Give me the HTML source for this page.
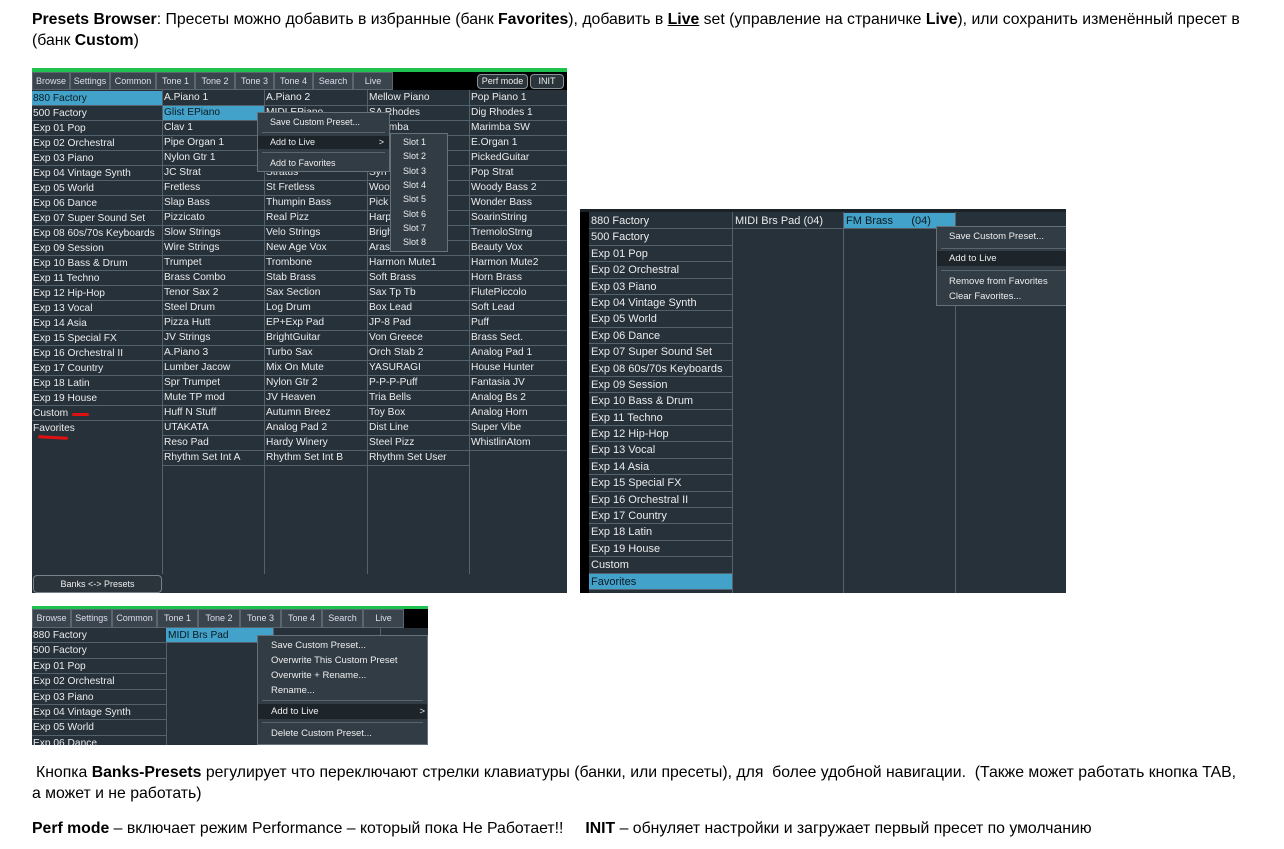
<!DOCTYPE html>
<html><head><meta charset="utf-8">
<style>
*{margin:0;padding:0;box-sizing:border-box}
body{width:1284px;height:849px;background:#fff;position:relative;overflow:hidden;font-family:"Liberation Sans","DejaVu Sans",sans-serif;color:#000}
.t{position:absolute;font-size:15.8px;white-space:nowrap;line-height:19px}
.p{position:absolute;background:#27313a;overflow:hidden}
.col{position:absolute;color:#ececec;font-size:10.2px}
.col div{height:15px;line-height:14px;border-bottom:1px solid #55616b;padding-left:1px;white-space:nowrap;overflow:hidden}
.vl{position:absolute;width:1px;background:#55616b}
.sel{background:#43a2c9;color:#0a1a22}
.tabs{position:absolute;display:flex;font-size:9px;color:#dde;}
.tabs span{display:block;height:100%;background:#3a444c;border:1px solid #5b666e;text-align:center;line-height:16px}
.menu{position:absolute;background:#323c44;border:1px solid #66717a;color:#eee;font-size:9px}
.menu div{position:absolute;left:0;right:0;padding-left:12px;height:13px;line-height:13px;white-space:nowrap}
.menu .sep{height:1px;background:#5a656d;padding:0;left:4px;right:4px}
.menu .hi{background:#1d252b}
.col2{position:absolute;color:#ececec;font-size:11px}
.col2 div{height:16.4px;line-height:16px;border-bottom:1px solid #55616b;border-right:1px solid #55616b;padding-left:2px;white-space:nowrap}
</style></head><body>

<div class="t" style="left:32px;top:10px"><b>Presets Browser</b>: Пресеты можно добавить в избранные (банк <b>Favorites</b>), добавить в <b><u>Live</u></b> set (управление на страничке <b>Live</b>), или сохранить изменённый пресет в</div>
<div class="t" style="left:32px;top:31px">(банк <b>Custom</b>)</div>

<!-- Panel 1 -->
<div class="p" style="left:32px;top:68px;width:535px;height:525px">
  <div style="position:absolute;left:0;top:0;width:535px;height:4px;background:#1fc24f"></div>
  <div style="position:absolute;left:0;top:4px;width:535px;height:18px;background:#000"></div>
  <div class="tabs" style="left:0;top:4px;height:18px">
    <span style="width:38px">Browse</span><span style="width:40px">Settings</span><span style="width:46px">Common</span><span style="width:39px">Tone 1</span><span style="width:40px">Tone 2</span><span style="width:39px">Tone 3</span><span style="width:39px">Tone 4</span><span style="width:40px">Search</span><span style="width:40px">Live</span>
  </div>
  <div style="position:absolute;left:445px;top:6px;width:51px;height:15px;border:1px solid #8a949b;border-radius:4px;background:#2b343b;color:#eee;font-size:9px;text-align:center;line-height:13px">Perf mode</div>
  <div style="position:absolute;left:498px;top:6px;width:34px;height:15px;border:1px solid #8a949b;border-radius:4px;background:#2b343b;color:#eee;font-size:9px;text-align:center;line-height:13px">INIT</div>

  <div class="vl" style="left:130px;top:22px;height:484px"></div>
  <div class="vl" style="left:232px;top:22px;height:484px"></div>
  <div class="vl" style="left:335px;top:22px;height:484px"></div>
  <div class="vl" style="left:437px;top:22px;height:484px"></div>

  <div class="col" style="left:0;top:23px;width:130px">
    <div class="sel" style="line-height:16px">880 Factory</div><div style="line-height:16px">500 Factory</div><div style="line-height:16px">Exp 01 Pop</div><div style="line-height:16px">Exp 02 Orchestral</div><div style="line-height:16px">Exp 03 Piano</div><div style="line-height:16px">Exp 04 Vintage Synth</div><div style="line-height:16px">Exp 05 World</div><div style="line-height:16px">Exp 06 Dance</div><div style="line-height:16px">Exp 07 Super Sound Set</div><div style="line-height:16px">Exp 08 60s/70s Keyboards</div><div style="line-height:16px">Exp 09 Session</div><div style="line-height:16px">Exp 10 Bass &amp; Drum</div><div style="line-height:16px">Exp 11 Techno</div><div style="line-height:16px">Exp 12 Hip-Hop</div><div style="line-height:16px">Exp 13 Vocal</div><div style="line-height:16px">Exp 14 Asia</div><div style="line-height:16px">Exp 15 Special FX</div><div style="line-height:16px">Exp 16 Orchestral II</div><div style="line-height:16px">Exp 17 Country</div><div style="line-height:16px">Exp 18 Latin</div><div style="line-height:16px">Exp 19 House</div><div style="line-height:16px">Custom</div><div style="border:none;line-height:16px">Favorites</div>
  </div>
  <div class="col" style="left:131px;top:23px;width:101px;line-height:16px">
    <div>A.Piano 1</div><div class="sel">Glist EPiano</div><div>Clav 1</div><div>Pipe Organ 1</div><div>Nylon Gtr 1</div><div>JC Strat</div><div>Fretless</div><div>Slap Bass</div><div>Pizzicato</div><div>Slow Strings</div><div>Wire Strings</div><div>Trumpet</div><div>Brass Combo</div><div>Tenor Sax 2</div><div>Steel Drum</div><div>Pizza Hutt</div><div>JV Strings</div><div>A.Piano 3</div><div>Lumber Jacow</div><div>Spr Trumpet</div><div>Mute TP mod</div><div>Huff N Stuff</div><div>UTAKATA</div><div>Reso Pad</div><div>Rhythm Set Int A</div>
  </div>
  <div class="col" style="left:233px;top:23px;width:102px">
    <div>A.Piano 2</div><div>MIDI EPiano</div><div>&nbsp;</div><div>&nbsp;</div><div>&nbsp;</div><div>Stratus</div><div>St Fretless</div><div>Thumpin Bass</div><div>Real Pizz</div><div>Velo Strings</div><div>New Age Vox</div><div>Trombone</div><div>Stab Brass</div><div>Sax Section</div><div>Log Drum</div><div>EP+Exp Pad</div><div>BrightGuitar</div><div>Turbo Sax</div><div>Mix On Mute</div><div>Nylon Gtr 2</div><div>JV Heaven</div><div>Autumn Breez</div><div>Analog Pad 2</div><div>Hardy Winery</div><div>Rhythm Set Int B</div>
  </div>
  <div class="col" style="left:336px;top:23px;width:101px">
    <div>Mellow Piano</div><div>SA Rhodes</div><div>Marimba</div><div>&nbsp;</div><div>&nbsp;</div><div>Syn Strat</div><div>Woody Bass</div><div>Pick Bass</div><div>Harp</div><div>Bright</div><div>Arasian Morn</div><div>Harmon Mute1</div><div>Soft Brass</div><div>Sax Tp Tb</div><div>Box Lead</div><div>JP-8 Pad</div><div>Von Greece</div><div>Orch Stab 2</div><div>YASURAGI</div><div>P-P-P-Puff</div><div>Tria Bells</div><div>Toy Box</div><div>Dist Line</div><div>Steel Pizz</div><div>Rhythm Set User</div>
  </div>
  <div class="col" style="left:438px;top:23px;width:97px">
    <div>Pop Piano 1</div><div>Dig Rhodes 1</div><div>Marimba SW</div><div>E.Organ 1</div><div>PickedGuitar</div><div>Pop Strat</div><div>Woody Bass 2</div><div>Wonder Bass</div><div>SoarinString</div><div>TremoloStrng</div><div>Beauty Vox</div><div>Harmon Mute2</div><div>Horn Brass</div><div>FlutePiccolo</div><div>Soft Lead</div><div>Puff</div><div>Brass Sect.</div><div>Analog Pad 1</div><div>House Hunter</div><div>Fantasia JV</div><div>Analog Bs 2</div><div>Analog Horn</div><div>Super Vibe</div><div>WhistlinAtom</div>
  </div>
  <div style="position:absolute;left:1px;top:507px;width:129px;height:18px;border:1px solid #77828a;border-radius:4px;background:#2b343b;color:#eee;font-size:9px;text-align:center;line-height:16px">Banks &lt;-&gt; Presets</div>
  <div style="position:absolute;left:40px;top:345px;width:17px;height:3px;border-radius:2px;background:#e01010"></div>
  <div style="position:absolute;left:6px;top:368px;width:30px;height:3px;border-radius:2px;background:#e01010;transform:rotate(3deg)"></div>

  <div class="menu" style="left:225px;top:44px;width:133px;height:60px">
    <div style="top:3px">Save Custom Preset...</div>
    <div class="sep" style="top:19px"></div>
    <div class="hi" style="top:23px">Add to Live<span style="position:absolute;right:5px">&gt;</span></div>
    <div class="sep" style="top:39px"></div>
    <div style="top:44px">Add to Favorites</div>
  </div>
  <div class="menu" style="left:358px;top:65px;width:58px;height:119px">
    <div style="top:2px">Slot 1</div><div style="top:16px">Slot 2</div><div style="top:31px">Slot 3</div><div style="top:45px">Slot 4</div><div style="top:59px">Slot 5</div><div style="top:74px">Slot 6</div><div style="top:88px">Slot 7</div><div style="top:102px">Slot 8</div>
  </div>
</div>

<!-- Panel 2 -->
<div class="p" style="left:580px;top:209px;width:486px;height:384px">
  <div style="position:absolute;left:0;top:0;width:9px;height:384px;background:#000"></div>
  <div style="position:absolute;left:0;top:0;width:486px;height:3px;background:#1b2227"></div>
  <div class="vl" style="left:152px;top:3px;height:381px"></div>
  <div class="vl" style="left:263px;top:3px;height:381px"></div>
  <div class="vl" style="left:375px;top:3px;height:381px"></div>
  <div class="col2" style="left:9px;top:4px;width:144px">
    <div>880 Factory</div><div>500 Factory</div><div>Exp 01 Pop</div><div>Exp 02 Orchestral</div><div>Exp 03 Piano</div><div>Exp 04 Vintage Synth</div><div>Exp 05 World</div><div>Exp 06 Dance</div><div>Exp 07 Super Sound Set</div><div>Exp 08 60s/70s Keyboards</div><div>Exp 09 Session</div><div>Exp 10 Bass &amp; Drum</div><div>Exp 11 Techno</div><div>Exp 12 Hip-Hop</div><div>Exp 13 Vocal</div><div>Exp 14 Asia</div><div>Exp 15 Special FX</div><div>Exp 16 Orchestral II</div><div>Exp 17 Country</div><div>Exp 18 Latin</div><div>Exp 19 House</div><div>Custom</div><div class="sel">Favorites</div>
  </div>
  <div class="col2" style="left:153px;top:4px;width:111px"><div>MIDI Brs Pad (04)</div></div>
  <div class="col2" style="left:264px;top:4px;width:112px"><div class="sel">FM Brass&nbsp;&nbsp;&nbsp;&nbsp;&nbsp;&nbsp;(04)</div></div>
  <div class="menu" style="left:356px;top:17px;width:135px;height:80px;font-size:9.5px">
    <div style="top:3px">Save Custom Preset...</div>
    <div class="sep" style="top:21px"></div>
    <div class="hi" style="top:24px;height:15px;line-height:15px">Add to Live</div>
    <div class="sep" style="top:43px"></div>
    <div style="top:48px">Remove from Favorites</div>
    <div style="top:63px">Clear Favorites...</div>
  </div>
</div>

<!-- Panel 3 -->
<div class="p" style="left:32px;top:606px;width:396px;height:139px">
  <div style="position:absolute;left:0;top:0;width:396px;height:3px;background:#1fc24f"></div>
  <div style="position:absolute;left:0;top:3px;width:396px;height:19px;background:#000"></div>
  <div class="tabs" style="left:0;top:3px;height:19px">
    <span style="width:39px;line-height:17px">Browse</span><span style="width:41px;line-height:17px">Settings</span><span style="width:45px;line-height:17px">Common</span><span style="width:41px;line-height:17px">Tone 1</span><span style="width:42px;line-height:17px">Tone 2</span><span style="width:41px;line-height:17px">Tone 3</span><span style="width:41px;line-height:17px">Tone 4</span><span style="width:41px;line-height:17px">Search</span><span style="width:41px;line-height:17px">Live</span>
  </div>
  <div class="vl" style="left:134px;top:22px;height:117px"></div>
  <div class="vl" style="left:241px;top:22px;height:117px"></div>
  <div class="vl" style="left:348px;top:22px;height:117px"></div>
  <div class="col" style="left:0;top:22px;width:134px;font-size:10.2px">
    <div style="height:15.4px;line-height:16px">880 Factory</div><div style="height:15.4px;line-height:16px">500 Factory</div><div style="height:15.4px;line-height:16px">Exp 01 Pop</div><div style="height:15.4px;line-height:16px">Exp 02 Orchestral</div><div style="height:15.4px;line-height:16px">Exp 03 Piano</div><div style="height:15.4px;line-height:16px">Exp 04 Vintage Synth</div><div style="height:15.4px;line-height:16px">Exp 05 World</div><div style="height:15.4px;line-height:16px">Exp 06 Dance</div>
  </div>
  <div class="col" style="left:134px;top:22px;width:107px"><div class="sel" style="height:15.4px;padding-left:2px;line-height:16px">MIDI Brs Pad</div></div>
  <div class="menu" style="left:225px;top:29px;width:171px;height:110px;font-size:9.5px">
    <div style="top:3px;padding-left:13px">Save Custom Preset...</div>
    <div style="top:18px;padding-left:13px">Overwrite This Custom Preset</div>
    <div style="top:33px;padding-left:13px">Overwrite + Rename...</div>
    <div style="top:48px;padding-left:13px">Rename...</div>
    <div class="sep" style="top:64px"></div>
    <div class="hi" style="top:68px;height:15px;line-height:15px;padding-left:13px">Add to Live<span style="position:absolute;right:2px">&gt;</span></div>
    <div class="sep" style="top:86px"></div>
    <div style="top:91px;padding-left:13px">Delete Custom Preset...</div>
  </div>
</div>

<div class="t" style="left:36px;top:763px">Кнопка <b>Banks-Presets</b> регулирует что переключают стрелки клавиатуры (банки, или пресеты), для&nbsp; более удобной навигации.&nbsp; (Также может работать кнопка TAB,</div>
<div class="t" style="left:32px;top:784px">а может и не работать)</div>
<div class="t" style="left:32px;top:819px"><b>Perf mode</b> – включает режим Performance – который пока Не Работает!!&nbsp;&nbsp;&nbsp;&nbsp; <b>INIT</b> – обнуляет настройки и загружает первый пресет по умолчанию</div>
</body></html>
